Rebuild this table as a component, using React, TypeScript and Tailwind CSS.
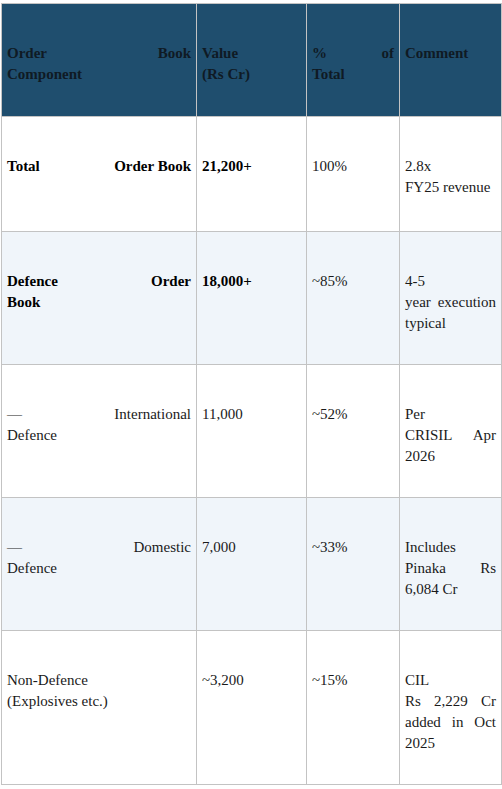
import React from "react";

type Line = string | string[];
type Cell = { lines: Line[]; bold?: boolean };
type Row = { cells: Cell[]; alt?: boolean; tall?: boolean };

const header: Cell[] = [
  { lines: [["Order", "Book"], "Component"] },
  { lines: ["Value", "(Rs Cr)"] },
  { lines: [["%", "of"], "Total"] },
  { lines: ["Comment"] }
];

const rows: Row[] = [
  {
    tall: true,
    cells: [
      { lines: [["Total", "Order Book"]], bold: true },
      { lines: ["21,200+"], bold: true },
      { lines: ["100%"] },
      { lines: ["2.8x", "FY25 revenue"] }
    ]
  },
  {
    alt: true,
    cells: [
      { lines: [["Defence", "Order"], "Book"], bold: true },
      { lines: ["18,000+"], bold: true },
      { lines: ["~85%"] },
      { lines: ["4-5", ["year", "execution"], "typical"] }
    ]
  },
  {
    cells: [
      { lines: [["—", "International"], "Defence"] },
      { lines: ["11,000"] },
      { lines: ["~52%"] },
      { lines: ["Per", ["CRISIL", "Apr"], "2026"] }
    ]
  },
  {
    alt: true,
    cells: [
      { lines: [["—", "Domestic"], "Defence"] },
      { lines: ["7,000"] },
      { lines: ["~33%"] },
      { lines: ["Includes", ["Pinaka", "Rs"], "6,084 Cr"] }
    ]
  },
  {
    cells: [
      { lines: ["Non-Defence", "(Explosives etc.)"] },
      { lines: ["~3,200"] },
      { lines: ["~15%"] },
      { lines: ["CIL", ["Rs", "2,229", "Cr"], ["added", "in", "Oct"], "2025"] }
    ]
  }
];

/* 两端对齐的行用 flex 拉开 */
const renderLine = (line: Line, i: number) => {
  if (typeof line === "string") {
    return (
      <div key={i} className="whitespace-nowrap">
        {line}
      </div>
    );
  }
  return (
    <div key={i} className="flex justify-between whitespace-nowrap">
      {line.map((w, j) => (
        <span key={j}>{w}</span>
      ))}
    </div>
  );
};

const App: React.FC = () => {
  return (
    <div className="w-[502px] h-[789px] bg-white overflow-hidden font-['Liberation_Serif','Times_New_Roman',serif]">
      <div className="mt-[3px] ml-[1px] w-[501px] border-l border-t border-[#c3c3c3] text-[15px] leading-[21px] text-[#1a1a1a]">
        <div className="grid grid-cols-[195px_110px_93px_102px] bg-[#1f4e6e] h-[113px]">
          {header.map((cell, i) => (
            <div
              key={i}
              className="border-r border-b border-[#c3c3c3] px-[5px] pt-[39px] font-bold text-[#0f1a24]"
            >
              {cell.lines.map(renderLine)}
            </div>
          ))}
        </div>

        {rows.map((row, r) => (
          <div
            key={r}
            className={[
              "grid grid-cols-[195px_110px_93px_102px]",
              row.alt ? "bg-[#f0f5fa]" : "bg-white",
              row.tall ? "h-[115px]" : ""
            ].join(" ")}
          >
            {row.cells.map((cell, i) => (
              <div
                key={i}
                className={
                  cell.bold
                    ? "border-r border-b border-[#c3c3c3] px-[5px] pt-[39px] pb-[30px] font-bold text-black"
                    : "border-r border-b border-[#c3c3c3] px-[5px] pt-[39px] pb-[30px]"
                }
              >
                {cell.lines.map(renderLine)}
              </div>
            ))}
          </div>
        ))}
      </div>
    </div>
  );
};

export default App;
